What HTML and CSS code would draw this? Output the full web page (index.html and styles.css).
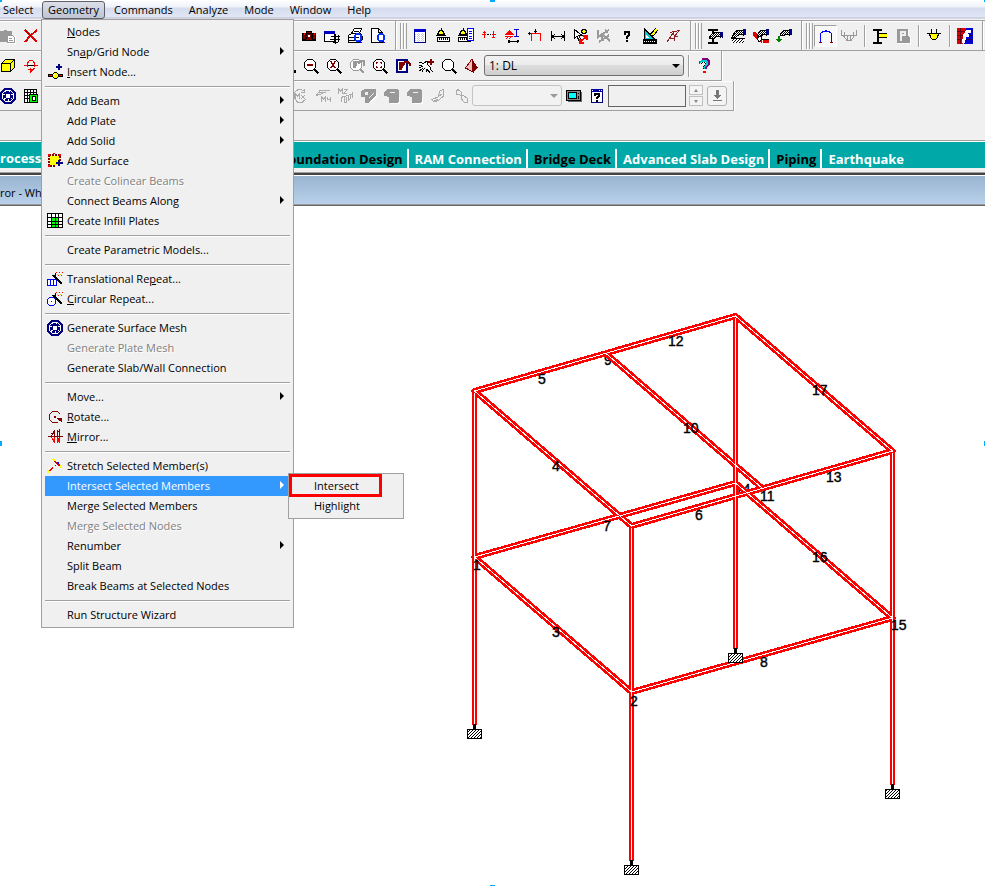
FILE: index.html
```
<!DOCTYPE html>
<html lang="en">
<head>
<meta charset="utf-8">
<title>Structure - Whole Structure</title>
<link rel="stylesheet" href="styles.css">
</head>
<body>
<svg class="sprite" aria-hidden="true">
  <defs>
    <pattern id="hatch" width="3" height="3" patternUnits="userSpaceOnUse"><rect width="3" height="3" fill="#fff"/><path d="M0 3L3 0M-1 1L1 -1M2 4L4 2" stroke="#000" stroke-width="1"/></pattern>
    <pattern id="dither" width="2" height="2" patternUnits="userSpaceOnUse"><rect width="2" height="2" fill="#fff"/><path d="M0 0h1v1h-1zM1 1h1v1h-1z" fill="#000"/></pattern>
  </defs>
  <symbol id="paste" viewBox="0 0 16 16"><path fill="#fff" d="M8 8h9v9h-9z"/><path fill="#999" d="M0 3h4v-1h3v1h5v4h-5v7h-7z"/><path fill="#fff" stroke="#999" d="M7.500 7.500h5l2 2v5h-7z"/><path stroke="#999" d="M9 10.500h3M9 12.500h4"/></symbol>
  <symbol id="cut" viewBox="0 0 16 16"><path fill="none" stroke="#e00000" stroke-width="2" d="M2 2L14 14M14 2L7 8L2 14"/><path stroke="#800000" d="M3 3L8 8"/></symbol>
  <symbol id="box" viewBox="0 0 16 16"><path fill="#ff0" stroke="#000" d="M1.500 5.500L5.500 1.500H14.500V9.500L10.500 13.500H1.500zM1.500 5.500H10.500V13.500M10.500 5.500L14.500 1.500"/></symbol>
  <symbol id="spin" viewBox="0 0 16 16"><path stroke="#000" d="M1 7.500H15"/><path fill="none" stroke="red" d="M4.500 9V5L6.500 2.500H9.500L11.500 5V9M5 11.500H7M9 12.500L11.500 10M1 7.500H4M12 7.500H15"/><path fill="red" d="M7 10l3 2l-3 3z"/></symbol>
  <symbol id="mesh" viewBox="0 0 16 16"><path fill="#fff" stroke="#000080" stroke-width="2" d="M5 1H11L15 5V11L11 15H5L1 11V5z"/><path fill="none" stroke="#000080" stroke-width="2" stroke-dasharray="3 1" d="M6 4H10L12 6V10L10 12H6L4 10V6z"/><path fill="#fff" stroke="#000080" d="M6.500 5.500H9.500L10.500 6.500V9.500L9.500 10.500H6.500L5.500 9.500V6.500z"/></symbol>
  <symbol id="gridplate" viewBox="0 0 16 16"><path fill="#fff" stroke="#000" d="M1.500 1.500H13.500V14.500H1.500zM4.500 1V14M7.500 1V14M10.500 1V14M1 4.500H14M1 7.500H14M1 10.500H14"/><path fill="#0f0" stroke="#000" d="M6.500 6.500H14.500V14.500H6.500z"/><path fill="#fff" stroke="#000" d="M9.500 8.500H12.500V12.500H9.500z"/></symbol>
  <symbol id="camera" viewBox="0 0 16 16"><path d="M1 5h4v-2h6v2h4v8h-14z"/><path fill="#800000" d="M2 6h2v5h-2zM12 6h2v5h-2zM5 11h6v1h-6zM6 4h4v1h-4z"/><path fill="#f00" d="M3 5h1v2h-1zM13 5h1v2h-1z"/><circle cx="8" cy="8.500" r="2.500" fill="#800000"/><path fill="#fff" d="M7 7h2v2h-2z"/></symbol>
  <symbol id="winlist" viewBox="0 0 16 16"><path fill="#fff" stroke="#000" d="M.5 3.500H10.500V13.500H.5z"/><path fill="#0000c0" d="M0 3h11v3h-11z"/><path stroke="#000" fill="none" d="M7 8.500H16M6 11.500H16M9 14.500H14M11.500 6V16M14.500 7V14"/></symbol>
  <symbol id="printer" viewBox="0 0 16 16"><path fill="#fff" stroke="#000" d="M4.500 5.500L7.500 .5H14.500L12.500 5.500zM1.500 7.500L4.500 5.500H13.500L15.500 8.500V11.500L12.500 14.500H1.500z"/><path stroke="#000" d="M7 3.500H12M2 9.500H12M2 12.500H10"/><ellipse cx="11" cy="9.500" rx="3" ry="4" fill="none" stroke="#0030ff" stroke-width="2"/><path stroke="#00f" d="M12 13L15 15"/></symbol>
  <symbol id="preview" viewBox="0 0 16 16"><path fill="#fff" stroke="#000" d="M1.500 .5H8.500L12.500 4.500V14.500H1.500zM8.500 1V4.500H12"/><ellipse cx="11" cy="9.500" rx="3" ry="4" fill="#fff" stroke="#0030ff" stroke-width="2"/><path stroke="#00f" d="M12 13L15 15"/></symbol>
  <symbol id="table" viewBox="0 0 16 16"><path fill="#fff" stroke="#000080" d="M2.500 1.500H13.500V14.500H2.500z"/><path fill="#0000d0" d="M2 1h12v3h-12z"/><path stroke="#c8c8e0" stroke-dasharray="1 1" d="M3 6.500H13M3 8.500H13M3 10.500H13M3 12.500H13M6.500 5V14M10.500 5V14"/></symbol>
  <symbol id="helmet" viewBox="0 0 16 16"><path fill="#ff0" stroke="#000" d="M2.500 6.500L4.500 2.500H7.500L9.500 6.500zM6 0V3M1 7.500H11"/><path fill="#fff" stroke="#000" d="M2.500 9.500H14.500V13.500H2.500zM4.500 10V12M6.500 10V12M8.500 10V12M10.500 10V12M12.500 10V12"/></symbol>
  <symbol id="helmetlist" viewBox="0 0 16 16"><path fill="#ff0" stroke="#000" d="M1.500 6.500L3.500 2.500H6.500L8.500 6.500zM5 0V3M0 7.500H9"/><path fill="#fff" stroke="#000" d="M.5 9.500H12.500V13.500H.5zM2.500 10V12M4.500 10V12M6.500 10V12M8.500 10V12"/><path fill="#fff" stroke="#00f" d="M9.500 .5H15.500V12.500H9.500zM11 3.500H14M11 5.500H14M11 8.500H14M11 10.500H14"/></symbol>
  <symbol id="nodes" viewBox="0 0 16 16"><path stroke="#f00" d="M1 6.500H5M11 6.500H15M3.500 3V10M12.500 3V10M2 4.500H5M11 9.500H14"/><path stroke="#000" d="M6 6.500H8M9 6.500H10"/></symbol>
  <symbol id="support" viewBox="0 0 16 16"><path fill="#f00" d="M5 2l5 5h-10zM1 8h8v1h-8zM1 11l2-2h1l-2 2zM4 11l2-2h1l-2 2z"/><path stroke="#00c" d="M12.500 2V9M10 1.500H15M10 8.500H15"/><path stroke="#000" d="M4 13.500H15M4 13.500L6 12M4 13.500L6 15M15 13.500L13 12M15 13.500L13 15"/></symbol>
  <symbol id="frameload" viewBox="0 0 16 16"><path fill="none" stroke="#f00" d="M4.500 13V5.500H13.500V13"/><path stroke="#000" d="M8.500 1V5M7 3.500H10M1 5.500H4M2.500 4V7"/></symbol>
  <symbol id="dimension" viewBox="0 0 16 16"><path stroke="#000" d="M1.500 3V13M14.500 3V13M2 8.500H14M2 8.500L5 6M2 8.500L5 11M14 8.500L11 6M14 8.500L11 11"/></symbol>
  <symbol id="pointload" viewBox="0 0 16 16"><path fill="#fff" stroke="#000" d="M1.500 1.500V10.500L4 8L6 13L8 12L6 7.500H9z"/><circle cx="11" cy="3.500" r="2.200" fill="#ff0" stroke="#000"/><path stroke="#f00" stroke-width="2" fill="none" d="M14 8L7 14M14 12V8H10M7 11V15H11"/></symbol>
  <symbol id="pointload-off" viewBox="0 0 16 16"><path fill="none" stroke="#999" stroke-width="2" d="M2 2V9L5 7L7 13M5 7L13 2M6 6L14 13M3 14L13 7M9 2L12 4"/></symbol>
  <symbol id="query" viewBox="0 0 16 16"><path fill="none" stroke="#000" stroke-width="2" d="M6 7V4H10V7L8 9V11M8 12V14"/></symbol>
  <symbol id="setsquare" viewBox="0 0 16 16"><path fill="#000" d="M1 11h14v5h-14z"/><path stroke="#fff" stroke-dasharray="1 1" d="M2 13.500H14"/><path fill="#000" d="M2 0l12 12h-12z"/><path fill="#0cc" d="M3 3l8 8h-8z"/><path fill="#fff" d="M4 7l3 3h-3z"/><path stroke="#000" stroke-width="4" d="M9 8L15 1"/><path stroke="#ff0" stroke-width="2" d="M10 7L15 1"/></symbol>
  <symbol id="axes" viewBox="0 0 16 16"><path fill="none" stroke="#902020" d="M2 14L8.500 4.500L10 13M4 10.500H10M5 4.500L14 2.500L10 8L13 9"/></symbol>
  <symbol id="ibeamhand" viewBox="0 0 16 16"><path stroke="#000" stroke-width="2" d="M1 2H11M1 15H11M6 2V15"/><path fill="url(#dither)" stroke="#000" d="M2 10L5 6L8 4L13 4V9L10 8L7 11z"/><path fill="#000080" d="M13 4h3v6h-1l-2-2z"/></symbol>
  <symbol id="fixhand" viewBox="0 0 16 16"><path fill="url(#dither)" stroke="#000" d="M2 9L5 4L8 2H13V7L10 6L6 9z"/><path fill="#000080" d="M13 1h3v6h-1l-2-1z"/><path fill="url(#hatch)" d="M2 11h12v4h-12z"/><path stroke="#000" d="M1 10.500H15"/></symbol>
  <symbol id="redhand" viewBox="0 0 16 16"><path fill="#e00000" d="M0 4h3l3 5h3v6l-3-1l-6-6zM10 12h6v3h-6z"/><path fill="url(#dither)" stroke="#000" d="M4 8L6 4L9 2H13V7L10 6L8 9z"/><path fill="#000080" d="M13 1h3v6h-1l-2-1z"/><path fill="#fff" stroke="#000" d="M4 10L8 8V12L6 14zM9 11.500H16"/></symbol>
  <symbol id="greenhand" viewBox="0 0 16 16"><path fill="url(#dither)" stroke="#000" d="M4 7L6 4L9 2H13V7L10 6L8 8z"/><path fill="#000080" d="M13 1h3v6h-1l-2-1z"/><path fill="#008000" d="M2 8h2v3h2l-3 4l-3-4h2z"/></symbol>
  <symbol id="portal" viewBox="0 0 16 16"><path fill="none" stroke="#00f" d="M2.500 14V5.500L5 3.500H7L8 2.500L9 3.500H11L13.500 5.500V14"/><path stroke="#800000" d="M1 14.500H4M12 14.500H15"/></symbol>
  <symbol id="moment" viewBox="0 0 16 16"><path fill="none" stroke="#999" d="M.5 2V7.500H15.500V2M2 7L6 12.500H10L14 7M3.500 4V8M12.500 4V8M6.500 8V12M9.500 8V12"/></symbol>
  <symbol id="steel" viewBox="0 0 16 16"><path fill="#ff0" d="M6 5h9v5h-9z"/><path stroke="#000" d="M6 5.500H15M6 9.500H15"/><path stroke="#000" stroke-width="2" d="M1 2H10M1 15H10M6 2V15"/></symbol>
  <symbol id="pdoc" viewBox="0 0 16 16"><path fill="#fff" d="M3 2h11v6l2 2v6h-13z"/><path fill="#999" d="M2 1h11v7l2 2v5h-13z"/><path fill="#f0f0f0" fill-rule="evenodd" d="M5 3h6v5h-4v5h-2zM7 5v1h2v-1z"/></symbol>
  <symbol id="plug" viewBox="0 0 16 16"><path fill="#ff0" stroke="#000" d="M3.500 5.500H12.500L11.500 9.500L9.500 11.500H6.500L4.500 9.500zM1 5.500H15M5.500 1V5M10.500 1V5"/></symbol>
  <symbol id="flogo" viewBox="0 0 16 16"><path fill="#e00000" d="M0 0h9l-3 16h-6z"/><path fill="#0000d0" d="M9 0h7v16h-9z"/><path stroke="#300020" stroke-opacity=".7" d="M0 3.500H16M0 7.500H16M0 11.500H16M3.500 0V16M12.500 0V16"/><path fill="none" stroke="#fff" stroke-width="3" d="M14 3H11L9 5L6 15M6 7H12"/></symbol>
  <symbol id="lensbit" viewBox="0 0 16 16"><path d="M13 12h3v3h-3z"/></symbol>
  <symbol id="lens" viewBox="0 0 16 16"><path fill="#fff" stroke="#000" d="M4.500 1.500H9.500L12.500 4.500V9.500L9.500 12.500H4.500L1.500 9.500V4.500z"/><path stroke="#000" stroke-width="2" d="M11 11L15.500 15.500"/></symbol>
  <symbol id="turn-off" viewBox="0 0 16 16"><path fill="#fff" stroke="#999" d="M4.500 1.500H9.500L12.500 4.500V9.500L9.500 12.500H4.500L1.500 9.500V4.500z"/><path stroke="#999" stroke-width="2" fill="none" d="M11 11L15 15M9 6L12 3H15V8"/><path fill="#999" d="M4 3h6l-2 3l-1 4h-3z"/></symbol>
  <symbol id="turn" viewBox="0 0 16 16"><path fill="#fff" stroke="#000080" stroke-width="2" d="M2 2H12V14H2z"/><path fill="#800000" d="M4 4h6v2l-2 2l-1 4h-3z"/><path fill="none" stroke="#800000" stroke-width="2" d="M7 7L10 4H13L15 6V8"/></symbol>
  <symbol id="pan" viewBox="0 0 16 16"><path fill="#fff" stroke="#000" d="M1 4.500H3L5 6L8 3.500H10L9 6L12 9V11L15 14M1 8L4 7.500M5 8L1.500 10M5 10L1.500 13M7 10L4 13.500M9 11L8 14M9 11L12 15"/><path stroke="#800000" stroke-width="2" d="M10 4H16M13 1V7"/></symbol>
  <symbol id="pyramid" viewBox="0 0 16 16"><path fill="#800000" d="M8 1L14 10L9 14z"/><path fill="#f0c0c0" stroke="#800000" d="M8 1L9 14L1.500 10z"/></symbol>
  <symbol id="help" viewBox="0 0 16 16"><path fill="none" stroke="#800080" stroke-width="2" d="M6 1H11L13 3V6L10 9V11"/><path fill="none" stroke="#0cc" stroke-width="2" d="M4 5V4L6 3H10L11 4V6L8 9V11"/><path fill="none" stroke="#000" stroke-dasharray="1 1" d="M5.500 6V4.500H9.500V6.500L7 9V11"/><path fill="#f00" d="M7 13h3v2h-3zM3 3h1v3h-1z"/></symbol>
  <symbol id="mx" viewBox="0 0 16 16"><path fill="none" stroke="#aaa" d="M12 3L9 1.500H6L2 5V10L6 14.500H10L14 11M12 1V4H9M3.500 11V6L5.500 8L7.500 6V11M9 7L13 11M13 7L9 11"/></symbol>
  <symbol id="my" viewBox="0 0 16 16"><path fill="none" stroke="#aaa" d="M1 8L5 2.500H15M3 4.500H11M1 8L8 5M6.500 14V9L8.500 11L10.500 9V14M12.500 9V11H15M15.500 9V14"/></symbol>
  <symbol id="mz" viewBox="0 0 16 16"><path fill="none" stroke="#aaa" d="M.5 6V1L2.500 3L4.500 1V6M6 1.500H9L6 5.500H9M3 9.500L14 6L15 4M3 10V14M6 9V14H8V9M10 8V13L12 11V7M14 6V10"/></symbol>
  <symbol id="solid-check" viewBox="0 0 16 16"><path fill="#fff" d="M9 12l7-6v2l-6 6h-3z"/><path fill="#999" d="M0 3l4-2h11v6l-3 3l-4 5h-4v-6h-4z"/><path fill="#f0f0f0" d="M4 4h3v3h-3zM8 9l5-4v1l-5 4z"/></symbol>
  <symbol id="solid-cube" viewBox="0 0 16 16"><path fill="#fff" d="M5 9h11v7h-10z"/><path fill="#999" d="M0 4l3-3h10l2 2v10l-2 2h-8v-6l-5-1z"/><path fill="#f0f0f0" d="M6 4h5v1h-5z"/></symbol>
  <symbol id="wedge" viewBox="0 0 16 16"><path fill="none" stroke="#aaa" d="M2 11.500L8 9L10 3L13.500 1.500V8L9 12L4 14zM8 9L12 6M4 13L8 11"/></symbol>
  <symbol id="curve" viewBox="0 0 16 16"><path fill="none" stroke="#aaa" d="M3 6.500V3.500L5 1.500L8.500 4.500V11L11 14H14V10L11 8L3 6z"/></symbol>
  <symbol id="monitor" viewBox="0 0 16 16"><path fill="#666" d="M15 4h1v10h-14v-1h13z"/><path fill="#888" stroke="#000" d="M.5 2.500H14.500V12.500H.5z"/><path fill="#0ff" stroke="#000" d="M2.500 4.500H10.500V10.500H2.500z"/><path fill="#000" d="M12 5h1v1h-1zM12 8h1v3h-1z"/></symbol>
  <symbol id="winhelp" viewBox="0 0 16 16"><path fill="#fff" stroke="#000080" d="M2.500 1.500H13.500V14.500H2.500z"/><path fill="#0000a0" d="M2 1h12v3h-12z"/><path fill="#fff" d="M3 2h1v1h-1zM10 2h1v1h-1zM12 2h1v1h-1z"/><path fill="none" stroke="#000" stroke-width="2" d="M6 8V6H10V8L8 9.500V11M8 12V14"/></symbol>
  <symbol id="insertnode" viewBox="0 0 16 16"><path stroke="#000" stroke-width="3" d="M1 11.500H16"/><path stroke="#f00" d="M2 11.500H5M11 11.500H15"/><path fill="#ff0" stroke="#000" d="M7.500 8.500H9.500L11.500 10.500V12.500L9.500 14.500H7.500L5.500 12.500V10.500z"/><path stroke="#000080" stroke-width="2" d="M9 3H15M12 0V6"/><path fill="#fff" d="M7 10h1v1h-1z"/></symbol>
  <symbol id="surface" viewBox="0 0 16 16"><path fill="#ff0" d="M3 3h9v9h-9z"/><path stroke="#800000" stroke-width="2" fill="none" stroke-dasharray="2 1" d="M2 2H13V8M2 2V13M3 13H9"/><path fill="#f00" d="M1 1h2v2h-2zM12 1h2v2h-2zM1 12h2v2h-2zM6 0h2v1h-2z"/><path stroke="#000080" stroke-width="2" d="M9 10H16M12 7V13"/></symbol>
  <symbol id="infill" viewBox="0 0 16 16"><path fill="#fff" stroke="#000" d="M.5 .5H15.500V14.500H.5z"/><path fill="#0f0" d="M5 5h7v9h-7z"/><path stroke="#000" d="M4.500 1V15M8.500 1V15M11.500 1V15M1 4.500H15M1 8.500H15M1 11.500H15"/></symbol>
  <symbol id="wand-rect" viewBox="0 0 16 16"><path fill="#fff" stroke="#00f" d="M.5 8.500H9.500V14.500H.5zM3.500 9V14M6.500 9V14"/><path stroke="#000" stroke-width="2" d="M7 5L15 13"/><path fill="none" stroke="#000" d="M5 4.500H8V2"/><path stroke="#f00" stroke-dasharray="1 2" d="M9 1.500H16M11 4.500H15"/><path stroke="#dd0" stroke-dasharray="1 2" d="M10 3.500H15"/></symbol>
  <symbol id="wand-circle" viewBox="0 0 16 16"><path fill="#fff" stroke="#00f" d="M2.500 6.500H6.500L8.500 8.500V12.500L6.500 14.500H2.500L.5 12.500V8.500z"/><path fill="#00f" d="M4 10h1v1h-1z"/><path stroke="#000" stroke-width="2" d="M7 5L15 13"/><path fill="none" stroke="#000" d="M5 4.500H8V2"/><path stroke="#f00" stroke-dasharray="1 2" d="M9 1.500H16M11 4.500H15"/><path stroke="#dd0" stroke-dasharray="1 2" d="M10 3.500H15"/></symbol>
  <symbol id="rotate" viewBox="0 0 16 16"><path fill="none" stroke="#800000" d="M13.500 5.500L10.500 2.500H5.500L2.500 5.500V10.500L5.500 13.500H10.500"/><path fill="#800000" d="M10 9h5v5l-2-2h-1zM7 7h2v2h-2z"/></symbol>
  <symbol id="mirror" viewBox="0 0 16 16"><path stroke="#800000" d="M1 7.500H16M4.500 7L7.500 1V7M10.500 7V1M10.500 4L12.500 1V7M4 4.500H7" fill="none"/><path fill="none" stroke="#f00" d="M4.500 8L7.500 14V8M10.500 14V8L12.500 14V8M5 10.500H8"/></symbol>
  <symbol id="stretch" viewBox="0 0 16 16"><path stroke="#e00000" stroke-width="1" d="M1 14L6 9M7 2L15 9M1 15L6 10M7 3L14 9"/><path stroke="#ff0" stroke-width="2" d="M0 15L2 13M6 1L8 3M13 8L15 10"/><path fill="#00f" d="M10 4h2v2h-2z"/><path fill="#e00000" d="M8 7h1v1h-1z"/></symbol>
</svg>

<header class="menubar">
  <button class="menubar-item first" type="button">Select</button>
  <div class="menubar-drop">
    <button class="menubar-item open" type="button" aria-expanded="true">Geometry</button>
    <ul class="menu">
      <li class="item"><u>N</u>odes</li>
      <li class="item more">Sn<u>a</u>p/Grid Node</li>
      <li class="item"><svg class="icon"><use href="#insertnode"/></svg><u>I</u>nsert Node...</li>
      <li class="rule"></li>
      <li class="item more">Add Beam</li>
      <li class="item more">Add Plate</li>
      <li class="item more">Add Solid</li>
      <li class="item"><svg class="icon"><use href="#surface"/></svg>Add Surface</li>
      <li class="item off">Create Colinear Beams</li>
      <li class="item more">Connect Beams Along</li>
      <li class="item"><svg class="icon"><use href="#infill"/></svg>Create Infill Plates</li>
      <li class="rule"></li>
      <li class="item">Create Parametric Models...</li>
      <li class="rule"></li>
      <li class="item"><svg class="icon"><use href="#wand-rect"/></svg>Translational Re<u>p</u>eat...</li>
      <li class="item"><svg class="icon"><use href="#wand-circle"/></svg><u>C</u>ircular Repeat...</li>
      <li class="rule"></li>
      <li class="item"><svg class="icon"><use href="#mesh"/></svg>Generate Surface Mesh</li>
      <li class="item off">Generate Plate Mesh</li>
      <li class="item">Generate Slab/Wall Connection</li>
      <li class="rule"></li>
      <li class="item more">Move...</li>
      <li class="item"><svg class="icon"><use href="#rotate"/></svg><u>R</u>otate...</li>
      <li class="item"><svg class="icon"><use href="#mirror"/></svg><u>M</u>irror...</li>
      <li class="rule"></li>
      <li class="item"><svg class="icon"><use href="#stretch"/></svg>Stretch Selected Member(s)</li>
      <li class="item more active">Intersect Selected Members
        <ul class="menu submenu">
          <li class="item marked">Intersect</li>
          <li class="item">Highlight</li>
        </ul>
      </li>
      <li class="item">Merge Selected Members</li>
      <li class="item off">Merge Selected Nodes</li>
      <li class="item more">Renumber</li>
      <li class="item">Split Beam</li>
      <li class="item">Break Beams at Selected Nodes</li>
      <li class="rule"></li>
      <li class="item">Run Structure Wizard</li>
    </ul>
  </div>
  <button class="menubar-item" type="button">Commands</button>
  <button class="menubar-item" type="button">Analyze</button>
  <button class="menubar-item" type="button">Mode</button>
  <button class="menubar-item" type="button">Window</button>
  <button class="menubar-item" type="button">Help</button>
</header>

<div class="toolbars">
  <div class="toolrow full">
    <div class="group">
      <div class="lead"><button class="tool" type="button" aria-label="Paste"><svg class="icon"><use href="#paste"/></svg></button><button class="tool" type="button" aria-label="Delete"><svg class="icon"><use href="#cut"/></svg></button></div>
      <button class="tool" type="button" aria-label="Take picture"><svg class="icon"><use href="#camera"/></svg></button>
      <button class="tool" type="button" aria-label="Report"><svg class="icon"><use href="#winlist"/></svg></button>
      <button class="tool" type="button" aria-label="Print"><svg class="icon"><use href="#printer"/></svg></button>
      <button class="tool" type="button" aria-label="Preview"><svg class="icon"><use href="#preview"/></svg></button>
    </div>
    <div class="group">
      <span class="grip"></span>
      <button class="tool" type="button" aria-label="Tables"><svg class="icon"><use href="#table"/></svg></button>
      <button class="tool" type="button" aria-label="Structure"><svg class="icon"><use href="#helmet"/></svg></button>
      <button class="tool" type="button" aria-label="Structure list"><svg class="icon"><use href="#helmetlist"/></svg></button>
      <button class="tool" type="button" aria-label="Nodes"><svg class="icon"><use href="#nodes"/></svg></button>
      <button class="tool" type="button" aria-label="Supports"><svg class="icon"><use href="#support"/></svg></button>
      <button class="tool" type="button" aria-label="Loads"><svg class="icon"><use href="#frameload"/></svg></button>
      <button class="tool" type="button" aria-label="Dimension"><svg class="icon"><use href="#dimension"/></svg></button>
      <button class="tool" type="button" aria-label="Node distance"><svg class="icon"><use href="#pointload"/></svg></button>
      <button class="tool" type="button" aria-label="Clear" disabled><svg class="icon"><use href="#pointload-off"/></svg></button>
      <button class="tool" type="button" aria-label="Info"><svg class="icon"><use href="#query"/></svg></button>
      <button class="tool" type="button" aria-label="Scale"><svg class="icon"><use href="#setsquare"/></svg></button>
      <button class="tool" type="button" aria-label="Labels"><svg class="icon"><use href="#axes"/></svg></button>
    </div>
    <div class="group">
      <span class="grip"></span>
      <button class="tool" type="button" aria-label="Property"><svg class="icon"><use href="#ibeamhand"/></svg></button>
      <button class="tool" type="button" aria-label="Support page"><svg class="icon"><use href="#fixhand"/></svg></button>
      <button class="tool" type="button" aria-label="Member page"><svg class="icon"><use href="#redhand"/></svg></button>
      <button class="tool" type="button" aria-label="Load page"><svg class="icon"><use href="#greenhand"/></svg></button>
    </div>
    <div class="group">
      <span class="grip"></span>
      <button class="tool pressed" type="button" aria-label="Model"><svg class="icon"><use href="#portal"/></svg></button>
      <button class="tool" type="button" aria-label="Results" disabled><svg class="icon"><use href="#moment"/></svg></button>
      <span class="divider"></span>
      <button class="tool" type="button" aria-label="Steel"><svg class="icon"><use href="#steel"/></svg></button>
      <button class="tool" type="button" aria-label="Piping" disabled><svg class="icon"><use href="#pdoc"/></svg></button>
      <span class="divider"></span>
      <button class="tool" type="button" aria-label="Connect"><svg class="icon"><use href="#plug"/></svg></button>
      <span class="divider"></span>
      <button class="tool" type="button" aria-label="Foundation"><svg class="icon"><use href="#flogo"/></svg></button>
    </div>
  </div>
  <div class="toolrow">
    <div class="group">
      <div class="lead near"><button class="tool" type="button" aria-label="Isometric"><svg class="icon"><use href="#box"/></svg></button><button class="tool" type="button" aria-label="Spin"><svg class="icon"><use href="#spin"/></svg></button></div>
      <button class="tool" type="button" aria-label="Zoom in"><svg class="icon"><use href="#lensbit"/></svg></button>
      <button class="tool" type="button" aria-label="Zoom out"><svg class="icon"><use href="#lens"/><path d="M4 7H10" stroke="#800000" stroke-width="2"/></svg></button>
      <button class="tool" type="button" aria-label="Zoom extents"><svg class="icon"><use href="#lens"/><path d="M5 4L9 10M9 4L5 10M4 3.500H6M8 3.500H10M4 9.500H6M8 9.500H10" stroke="#800000"/></svg></button>
      <button class="tool" type="button" aria-label="Zoom previous" disabled><svg class="icon"><use href="#turn-off"/></svg></button>
      <button class="tool" type="button" aria-label="Zoom all"><svg class="icon"><use href="#lens"/><path d="M4.500 6V4.500H6M8 4.500H9.500V6M4.500 8V9.500H6M8 9.500H9.500V8" fill="none" stroke="#800000"/></svg></button>
      <button class="tool" type="button" aria-label="Previous view"><svg class="icon"><use href="#turn"/></svg></button>
      <button class="tool" type="button" aria-label="Pan"><svg class="icon"><use href="#pan"/></svg></button>
      <button class="tool" type="button" aria-label="Magnify"><svg class="icon"><use href="#lens"/></svg></button>
      <button class="tool" type="button" aria-label="3D view"><svg class="icon"><use href="#pyramid"/></svg></button>
      <span class="combo wide"><select aria-label="Load case"><option>1: DL</option></select></span>
      <span class="divider"></span>
      <button class="tool" type="button" aria-label="Help"><svg class="icon"><use href="#help"/></svg></button>
    </div>
  </div>
  <div class="toolrow">
    <div class="group">
      <div class="lead mid"><button class="tool" type="button" aria-label="Surface mesh"><svg class="icon"><use href="#mesh"/></svg></button><button class="tool" type="button" aria-label="Plate"><svg class="icon"><use href="#gridplate"/></svg></button></div>
      <button class="tool" type="button" aria-label="Mx" disabled><svg class="icon"><use href="#mx"/></svg></button>
      <button class="tool" type="button" aria-label="My" disabled><svg class="icon"><use href="#my"/></svg></button>
      <button class="tool" type="button" aria-label="Mz" disabled><svg class="icon"><use href="#mz"/></svg></button>
      <button class="tool" type="button" aria-label="Stress" disabled><svg class="icon"><use href="#solid-check"/></svg></button>
      <button class="tool" type="button" aria-label="Plate stress" disabled><svg class="icon"><use href="#solid-cube"/></svg></button>
      <button class="tool" type="button" aria-label="Solid stress" disabled><svg class="icon"><use href="#solid-cube"/></svg></button>
      <button class="tool" type="button" aria-label="Deflection" disabled><svg class="icon"><use href="#wedge"/></svg></button>
      <button class="tool" type="button" aria-label="Mode shape" disabled><svg class="icon"><use href="#curve"/></svg></button>
      <span class="combo small"><select aria-label="Mode" disabled><option></option></select></span>
      <button class="tool" type="button" aria-label="Animate"><svg class="icon"><use href="#monitor"/></svg></button>
      <button class="tool" type="button" aria-label="Window help"><svg class="icon"><use href="#winhelp"/></svg></button>
      <input class="value" type="text" aria-label="Value">
      <span class="spinner"><button type="button" aria-label="Up" disabled></button><button type="button" aria-label="Down" disabled></button></span>
      <button class="apply" type="button" aria-label="Apply" disabled><svg class="icon"><path d="M7 2h3v5h3l-4.500 4l-4.500-4h3z" fill="#777"/><path d="M4 12.500H13" stroke="#777"/></svg></button>
    </div>
  </div>
</div>

<nav class="pages">
  <div class="pages-left"><a href="#">rocessi</a></div>
  <a href="#" class="dark">Foundation Design</a>
  <a href="#">RAM Connection</a>
  <a href="#" class="dark">Bridge Deck</a>
  <a href="#">Advanced Slab Design</a>
  <a href="#" class="dark">Piping</a>
  <a href="#">Earthquake</a>
</nav>
<div class="caption">ror - Wh</div>

<main class="canvas">
  <svg class="model" viewBox="0 206 985 680" role="img" aria-label="Frame model">
    <g class="labels"><text x="604" y="365">9</text><text x="735" y="494">14</text></g>
    <g class="steel">
      <path class="beam" d="M474.500 391L735.500 316L892.500 451L631.500 526zM605.500 353L762 488"/>
      <path class="beam" d="M474.500 557L735.500 483L892.500 618L631.500 692z"/>
      <path d="M474.500 391V725M735.500 316V649M892.500 451V785M631.500 526V861"/>
    </g>
    <g class="core">
      <path d="M474.500 391L735.500 316L892.500 451L631.500 526zM605.500 353L762 488"/>
      <path d="M474.500 557L735.500 483L892.500 618L631.500 692z"/>
      <path d="M474.500 393V725M735.500 318V649M892.500 453V785M631.500 528V861"/>
    </g>
    <g class="base">
      <path d="M467.500 729.500h14v9h-14z"/><path d="M728.500 653.500h14v9h-14z"/><path d="M885.500 789.500h14v9h-14z"/><path d="M624.500 865.500h14v9h-14z"/>
    </g>
    <path class="pin" d="M474.500 724V729M735.500 648V653M892.500 784V789M631.500 860V865"/>
    <g class="labels">
      <text x="473" y="570">1</text><text x="630" y="706">2</text><text x="552" y="637">3</text><text x="552" y="471">4</text><text x="538" y="384">5</text><text x="695" y="520">6</text><text x="603" y="531">7</text><text x="760" y="667">8</text><text x="683" y="433">10</text><text x="760" y="501">11</text><text x="668" y="346">12</text><text x="826" y="482">13</text><text x="891" y="630">15</text><text x="812" y="562">16</text><text x="812" y="395">17</text>
    </g>
  </svg>
</main>
<i class="handle top left"></i><i class="handle top center"></i><i class="handle top right"></i>
<i class="handle middle left"></i><i class="handle middle right"></i><i class="handle bottom center"></i>
</body>
</html>
```
FILE: styles.css
```
*, ::before, ::after { box-sizing: border-box; }
body {
  margin: 0;
  min-height: 100vh;
  display: flex;
  flex-direction: column;
  position: relative;
  overflow: hidden;
  background: #f0f0f0;
  color: #000;
  font: 11px/20px "Open Sans", "Noto Sans", sans-serif;
}
button, select, input { font: inherit; color: inherit; padding: 0; margin: 0; }
.sprite { position: absolute; width: 0; height: 0; }
.icon { display: block; width: 16px; height: 16px; shape-rendering: crispEdges; }

.menubar {
  display: flex;
  height: 20px;
  background: linear-gradient(#fff 0, #eff2f9 7px, #d5dcee 8px, #e0e6f5 17px, #b4bacb 18px, #f4f4f8 19px);
}
.menubar-item { height: 20px; padding: 0 8px; border: 0; background: none; display: block; line-height: 20px; }
.menubar-item.first { width: 41px; padding: 0 0 0 3px; text-align: left; }
.menubar-item.open {
  height: 18px; margin: 1px; padding: 0 5px; line-height: 16px;
  border: 1px solid #5d6068; border-radius: 3px;
  background: linear-gradient(#dcdfe9, #bfc4d2);
}
.menubar-drop { position: relative; z-index: 2; }

.menu {
  position: absolute; top: 19px; left: 0; width: 253px;
  margin: 0; padding: 2px 3px; list-style: none;
  background: #f0f0f0; border: 1px solid #a0a0a0;
}
.item { position: relative; height: 20px; padding-left: 22px; white-space: nowrap; }
.item > .icon { position: absolute; left: 2px; top: 2px; }
.item.off { color: #808080; text-shadow: 1px 1px #fff; }
.item.more::after {
  content: ""; position: absolute; right: 6px; top: 5px;
  border: solid transparent; border-width: 4px 0 4px 4px; border-left-color: currentColor;
}
.item.active { background: #3399ff; color: #fff; }
.rule { height: 9px; padding-top: 4px; }
.rule::before { content: ""; display: block; height: 2px; background: #a0a0a0; border-bottom: 1px solid #fff; }
.submenu { top: -3px; left: 243px; width: 116px; color: #000; }
.marked::before { content: ""; position: absolute; left: -3px; top: -2px; width: 93px; height: 23px; border: 3px solid #f00; }

.toolbars { height: 121px; border-top: 1px solid #a0a0a0; }
.toolrow { display: flex; height: 30px; }
.toolrow.full { border-bottom: 1px solid #a0a0a0; }
.toolrow.full .group { border-bottom: 0; }
.group {
  display: flex; align-items: center; padding-right: 6px;
  border-right: 1px solid #a0a0a0; border-bottom: 1px solid #a0a0a0;
  box-shadow: 1px 0 #fff, inset 0 1px #fff;
}
.tool { width: 23px; height: 22px; border: 0; background: none; display: grid; place-items: center; flex: none; }
.tool.pressed { border: 1px solid #a0a0a0; border-right-color: #fff; border-bottom-color: #fff; background: #f8f8f8; }
.lead { display: flex; width: 301px; margin-left: -4px; flex: none; }
.lead.near { width: 280px; }
.lead.mid { width: 292px; }
.grip { width: 7px; height: 26px; margin: 0 1px 0 4px; border: solid #a0a0a0; border-width: 0 1px; flex: none; background: linear-gradient(90deg, #fff 1px, #f0f0f0 1px 2px, #a0a0a0 2px 3px, #fff 3px 4px, #f0f0f0 4px); }
.divider { width: 2px; height: 22px; margin: 0 2px 0 4px; background: #a0a0a0; border-right: 1px solid #fff; flex: none; }
.combo { position: relative; display: block; }
.combo.wide { width: 200px; margin-left: 1px; }
.combo.small { width: 90px; }
.combo select {
  appearance: none; display: block; width: 100%; height: 21px; padding: 0 4px;
  border: 1px solid #707070; border-radius: 3px; font-size: 12px; line-height: 18px;
  background: linear-gradient(#f2f2f2, #ebebeb 50%, #dddddd 50%, #cfcfcf);
}
.combo select:disabled { background: #f4f4f4; border-color: #adb2b5; }
.combo::after { content: ""; position: absolute; right: 4px; top: 9px; border: solid transparent; border-width: 4px 4px 0; border-top-color: #000; }
.combo.small::after { border-top-color: #999; }
.value { width: 78px; height: 22px; border: 1px solid #646464; background: #f0f0f0; }
.spinner { display: grid; width: 14px; margin: 0 4px 0 3px; gap: 1px; }
.spinner button { height: 10px; border: 1px solid #c0c0c0; background: #f4f4f4; display: grid; place-items: center; }
.spinner button::before { content: ""; border: solid transparent; border-width: 0 2px 3px; border-bottom-color: #888; }
.spinner button:last-child::before { border-width: 3px 2px 0; border-top-color: #888; }
.apply { width: 20px; height: 20px; border: 1px solid #adb2b5; border-radius: 3px; background: #f4f4f4; display: grid; place-items: center; }

.pages {
  display: flex; align-items: flex-end; height: 27px;
  border-top: 1px solid #fff; box-shadow: 0 -1px #a0a0a0;
  background: #00a8a8; overflow: hidden; font-size: 13px;
}
.pages a { height: 19px; padding: 0 4px 0 6px; border-right: 2px solid #fff; color: #fff; font-weight: 700; text-decoration: none; white-space: nowrap; flex: none; }
.pages a.dark { color: #000; }
.pages a:last-child { border: 0; }
.pages .pages-left { width: 275px; flex: none; }
.pages .pages-left a { border: 0; padding: 0; }

.caption {
  height: 38px; padding-top: 15px; border-bottom: 1px solid #666;
  background: linear-gradient(#f0f0f0 4px, #a0a0a0 4px 5px, #444 5px 7px, #fff 7px 8px, #99b4d1 8px, #b9d1ea 36px, #999 36px);
}
.canvas { flex: 1; min-height: 0; background: #fff; overflow: hidden; }
.model { display: block; width: 985px; height: 680px; }
.steel path { fill: none; stroke: #f00; stroke-width: 5px; stroke-linejoin: round; shape-rendering: crispEdges; }
.steel .beam { stroke-width: 6px; }
.core path { fill: none; stroke: #fff; stroke-width: 1px; shape-rendering: crispEdges; }
.base path { fill: url(#hatch); stroke: #000; shape-rendering: crispEdges; }
.pin { stroke: #000; stroke-width: 3px; }
.labels { font: 14px "Liberation Sans", Arial, sans-serif; stroke: #000; stroke-width: .4px; }

.handle { position: absolute; width: 5px; height: 5px; background: #00aaff; z-index: 3; }
.top { top: 0; height: 2px; }
.bottom { bottom: 0; height: 1px; }
.middle { top: 441px; }
.left { left: 0; width: 2px; }
.right { right: 0; width: 1px; }
.center { left: 490px; }
```
